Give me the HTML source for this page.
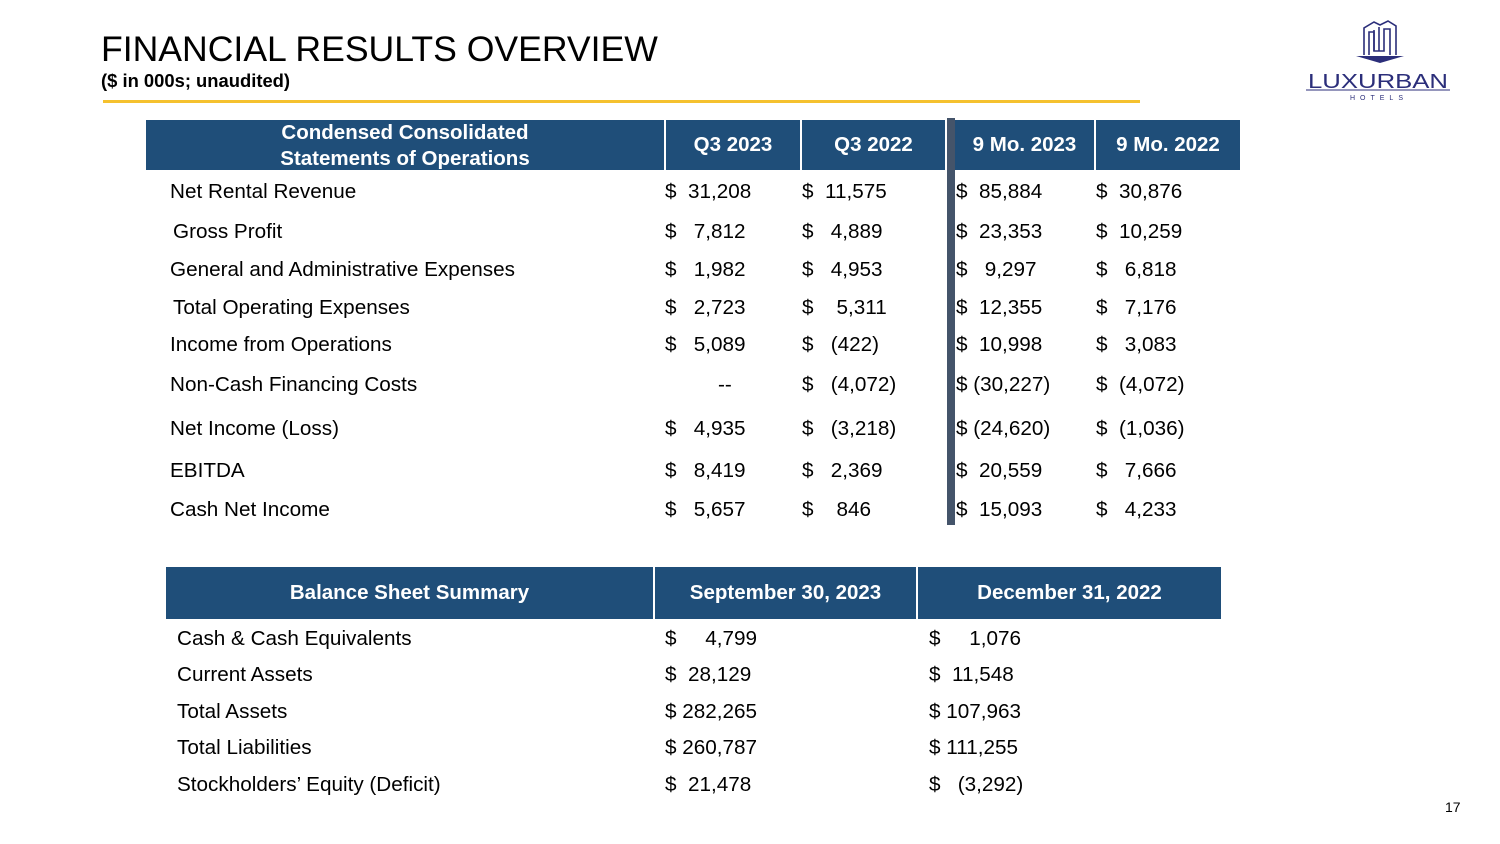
<!DOCTYPE html>
<html><head><meta charset="utf-8"><style>
body{margin:0;width:1500px;height:844px;background:#fff;position:relative;overflow:hidden;font-family:"Liberation Sans",Arial,sans-serif;color:#000}
.a{position:absolute;white-space:nowrap}
.h{position:absolute;background:#1F4E79;color:#fff;font-weight:bold;font-size:20.5px;display:flex;align-items:center;justify-content:center;text-align:center;line-height:26px}
.t{font-size:20.7px}
</style></head><body>
<div class="a" style="left:101px;top:29px;font-size:35.6px;color:#000">FINANCIAL RESULTS OVERVIEW</div>
<div class="a" style="left:101px;top:70px;font-size:18.4px;font-weight:bold">($ in 000s; unaudited)</div>
<div class="a" style="left:103px;top:100px;width:1037px;height:3px;background:#F5C12E"></div>

<svg class="a" style="left:1300px;top:14px" width="160" height="92" viewBox="0 0 160 92">
<g fill="none" stroke="#2B2E7A" stroke-width="1.6">
<path d="M64 41V14l10-6 6 3 8-4 8 5v29"/>
<path d="M69 41V18h5v19h10V15h6v26"/><path d="M74 16v21M79 13v24"/>
</g>
<path d="M56 42h48l-24 7z" fill="#2B2E7A"/>
<text x="78" y="74" text-anchor="middle" font-family="Liberation Sans" font-size="20" fill="#2B2E7A" textLength="140" lengthAdjust="spacingAndGlyphs">LUXURBAN</text>
<line x1="6" y1="76" x2="150" y2="76" stroke="#2B2E7A" stroke-width="1"/>
<text x="79" y="86" text-anchor="middle" font-family="Liberation Sans" font-size="7" fill="#2B2E7A" letter-spacing="5">HOTELS</text>
</svg>

<div class="h" style="left:146px;top:120px;width:518px;height:50px;padding-top:2px;box-sizing:border-box">Condensed Consolidated<br>Statements of Operations</div>
<div class="h" style="left:666px;top:120px;width:134px;height:50px">Q3 2023</div>
<div class="h" style="left:802px;top:120px;width:143px;height:50px">Q3 2022</div>
<div class="h" style="left:955px;top:120px;width:139px;height:50px">9 Mo. 2023</div>
<div class="h" style="left:1096px;top:120px;width:144px;height:50px">9 Mo. 2022</div>
<div class="a" style="left:947px;top:118px;width:8px;height:407px;background:#44546A"></div>

<div class="t">
<div class="a" style="left:170px;top:180px">Net Rental Revenue</div>
<div class="a" style="left:173px;top:220px">Gross Profit</div>
<div class="a" style="left:170px;top:258px">General and Administrative Expenses</div>
<div class="a" style="left:173px;top:296px">Total Operating Expenses</div>
<div class="a" style="left:170px;top:333px">Income from Operations</div>
<div class="a" style="left:170px;top:373px">Non-Cash Financing Costs</div>
<div class="a" style="left:170px;top:417px">Net Income (Loss)</div>
<div class="a" style="left:170px;top:459px">EBITDA</div>
<div class="a" style="left:170px;top:498px">Cash Net Income</div>

<div class="a" style="left:665px;top:180px">$&nbsp; 31,208</div>
<div class="a" style="left:665px;top:220px">$&nbsp;&nbsp; 7,812</div>
<div class="a" style="left:665px;top:258px">$&nbsp;&nbsp; 1,982</div>
<div class="a" style="left:665px;top:296px">$&nbsp;&nbsp; 2,723</div>
<div class="a" style="left:665px;top:333px">$&nbsp;&nbsp; 5,089</div>
<div class="a" style="left:718px;top:373px">--</div>
<div class="a" style="left:665px;top:417px">$&nbsp;&nbsp; 4,935</div>
<div class="a" style="left:665px;top:459px">$&nbsp;&nbsp; 8,419</div>
<div class="a" style="left:665px;top:498px">$&nbsp;&nbsp; 5,657</div>

<div class="a" style="left:802px;top:180px">$&nbsp; 11,575</div>
<div class="a" style="left:802px;top:220px">$&nbsp;&nbsp; 4,889</div>
<div class="a" style="left:802px;top:258px">$&nbsp;&nbsp; 4,953</div>
<div class="a" style="left:802px;top:296px">$&nbsp;&nbsp;&nbsp; 5,311</div>
<div class="a" style="left:802px;top:333px">$&nbsp;&nbsp; (422)</div>
<div class="a" style="left:802px;top:373px">$&nbsp;&nbsp; (4,072)</div>
<div class="a" style="left:802px;top:417px">$&nbsp;&nbsp; (3,218)</div>
<div class="a" style="left:802px;top:459px">$&nbsp;&nbsp; 2,369</div>
<div class="a" style="left:802px;top:498px">$&nbsp;&nbsp;&nbsp; 846</div>

<div class="a" style="left:956px;top:180px">$&nbsp; 85,884</div>
<div class="a" style="left:956px;top:220px">$&nbsp; 23,353</div>
<div class="a" style="left:956px;top:258px">$&nbsp;&nbsp; 9,297</div>
<div class="a" style="left:956px;top:296px">$&nbsp; 12,355</div>
<div class="a" style="left:956px;top:333px">$&nbsp; 10,998</div>
<div class="a" style="left:956px;top:373px">$ (30,227)</div>
<div class="a" style="left:956px;top:417px">$ (24,620)</div>
<div class="a" style="left:956px;top:459px">$&nbsp; 20,559</div>
<div class="a" style="left:956px;top:498px">$&nbsp; 15,093</div>

<div class="a" style="left:1096px;top:180px">$&nbsp; 30,876</div>
<div class="a" style="left:1096px;top:220px">$&nbsp; 10,259</div>
<div class="a" style="left:1096px;top:258px">$&nbsp;&nbsp; 6,818</div>
<div class="a" style="left:1096px;top:296px">$&nbsp;&nbsp; 7,176</div>
<div class="a" style="left:1096px;top:333px">$&nbsp;&nbsp; 3,083</div>
<div class="a" style="left:1096px;top:373px">$&nbsp; (4,072)</div>
<div class="a" style="left:1096px;top:417px">$&nbsp; (1,036)</div>
<div class="a" style="left:1096px;top:459px">$&nbsp;&nbsp; 7,666</div>
<div class="a" style="left:1096px;top:498px">$&nbsp;&nbsp; 4,233</div>
</div>

<div class="h" style="left:166px;top:567px;width:487px;height:52px">Balance Sheet Summary</div>
<div class="h" style="left:655px;top:567px;width:261px;height:52px">September 30, 2023</div>
<div class="h" style="left:918px;top:567px;width:303px;height:52px">December 31, 2022</div>

<div class="t">
<div class="a" style="left:177px;top:627px">Cash &amp; Cash Equivalents</div>
<div class="a" style="left:177px;top:663px">Current Assets</div>
<div class="a" style="left:177px;top:700px">Total Assets</div>
<div class="a" style="left:177px;top:736px">Total Liabilities</div>
<div class="a" style="left:177px;top:773px">Stockholders’ Equity (Deficit)</div>

<div class="a" style="left:665px;top:627px">$&nbsp;&nbsp;&nbsp;&nbsp; 4,799</div>
<div class="a" style="left:665px;top:663px">$&nbsp; 28,129</div>
<div class="a" style="left:665px;top:700px">$ 282,265</div>
<div class="a" style="left:665px;top:736px">$ 260,787</div>
<div class="a" style="left:665px;top:773px">$&nbsp; 21,478</div>

<div class="a" style="left:929px;top:627px">$&nbsp;&nbsp;&nbsp;&nbsp; 1,076</div>
<div class="a" style="left:929px;top:663px">$&nbsp; 11,548</div>
<div class="a" style="left:929px;top:700px">$ 107,963</div>
<div class="a" style="left:929px;top:736px">$ 111,255</div>
<div class="a" style="left:929px;top:773px">$&nbsp;&nbsp; (3,292)</div>
</div>
<div class="a" style="left:1445px;top:799px;font-size:14px">17</div>
</body></html>
